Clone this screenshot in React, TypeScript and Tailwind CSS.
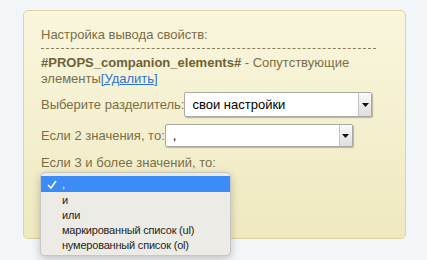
import React from "react";

const options = [",", "и", "или", "маркированный список (ul)", "нумерованный список (ol)"];

function FakeSelect({ value, width, height }: { value: string; width: string; height: string }) {
  return (
    <div
      className={`flex ${width} ${height} bg-white border border-[#a9a9a9] rounded-[2px] shadow-[1px_1px_1px_rgba(0,0,0,0.25)]`}
    >
      <span className="flex-1 pl-[7px] flex items-center text-[13px] text-black">{value}</span>
      <span className="w-[13px] flex items-center justify-center border-l border-[#c4c4c4] bg-gradient-to-b from-[#fafafa] to-[#dedede]">
        <svg width="7" height="4" viewBox="0 0 7 4">
          <polygon points="0,0 7,0 3.5,4" fill="#111" />
        </svg>
      </span>
    </div>
  );
}

export default function App() {
  return (
    <div
      className="w-[427px] h-[260px] bg-[#f3f6f8] pt-[10px] pl-[23px] overflow-hidden"
      style={{ fontFamily: '"Liberation Sans", Arial, sans-serif' }}
    >
      <div className="w-[383px] h-[229px] rounded-[5px] border border-[#ddd4a2] bg-gradient-to-b from-[#f9f6de] to-[#efe9bf] pt-[16px] pl-[17px] text-[13px] leading-[16px] text-[#7a6e46]">
        <div className="mb-[5px]">Настройка вывода свойств:</div>
        <div className="w-[335px] border-t border-dashed border-[#8a7e58]" />
        <p className="mt-[6px] w-[335px]">
          <b className="text-[#6e6138]">#PROPS_companion_elements#</b> - Сопутствующие элементы
          <a href="#" className="text-[#2a72d8] underline">
            [Удалить]
          </a>
        </p>
        <div className="mt-[5px] flex items-center">
          <span>Выберите разделитель:</span>
          <FakeSelect value="свои настройки" width="w-[188px]" height="h-[25px]" />
        </div>
        <div className="mt-[7px] flex items-center">
          <span>Если 2 значения, то:</span>
          <FakeSelect value="," width="w-[188px]" height="h-[23px]" />
        </div>
        <div className="mt-[8px]">Если 3 и более значений, то:</div>
        <div className="relative h-[22px]">
          <div className="absolute top-[1px] left-[-1px] w-[191px] rounded-[5px] border border-[#c6c6c6] bg-[#ecebe6] shadow-[0_3px_8px_rgba(0,0,0,0.22)] py-[3px] text-[11px] tracking-[-0.2px] text-[#1e1e1e] z-10">
            {options.map((o, i) => (
              <div
                key={o}
                className={`flex items-center ${i === 0 ? "h-[16px] bg-[#3b8cf6] text-white" : "h-[15px]"}`}
              >
                <span className="w-[21px] flex justify-end pr-[5px]">
                  {i === 0 && (
                    <svg width="10" height="9" viewBox="0 0 10 9">
                      <polyline points="1,5 4,8 9,1" fill="none" stroke="white" strokeWidth="1.6" />
                    </svg>
                  )}
                </span>
                <span>{o}</span>
              </div>
            ))}
          </div>
        </div>
      </div>
    </div>
  );
}
